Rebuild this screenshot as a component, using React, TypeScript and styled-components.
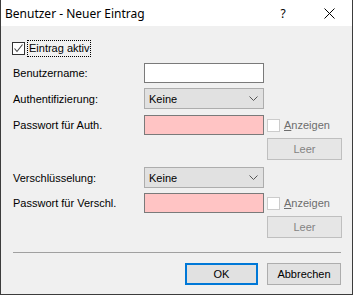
import React from "react";
import styled, { createGlobalStyle } from "styled-components";

const Global = createGlobalStyle`
  html, body { margin: 0; padding: 0; background: #f0f0f0; }
  body { font-family: "Liberation Sans", Arial, sans-serif; font-size: 11px; color: #000; }
  * { box-sizing: border-box; }
`;

const Window = styled.div`
  width: 353px;
  height: 295px;
  background: #f0f0f0;
  border-left: 1px solid #3c3c3c;
  border-right: 1px solid #3c3c3c;
  border-bottom: 1px solid #3c3c3c;
  display: flex;
  flex-direction: column;
`;

const TitleBar = styled.div`
  height: 26px;
  background: #fff;
  display: flex;
  align-items: center;
  padding-left: 4px;
  font-family: "Noto Sans", "Liberation Sans", sans-serif;
  font-size: 12px;
`;

const Title = styled.div`
  flex: 1;
`;

const TitleButton = styled.div<{ $w: number }>`
  width: ${(p) => p.$w}px;
  height: 26px;
  display: flex;
  align-items: center;
  justify-content: center;
`;

const Body = styled.div`
  padding-left: 12px;
  padding-right: 10px;
  display: flex;
  flex-direction: column;
`;

const Row = styled.div<{ $mt: number; $h: number; $ml?: number }>`
  margin-top: ${(p) => p.$mt}px;
  margin-left: ${(p) => p.$ml ?? 0}px;
  height: ${(p) => p.$h}px;
  display: flex;
  align-items: center;
`;

const Label = styled.div`
  width: 131px;
  flex: none;
`;

const Spacer = styled.div<{ $w: number }>`
  width: ${(p) => p.$w}px;
  flex: none;
`;

const TextBox = styled.div<{ $pink?: boolean }>`
  width: 120px;
  height: 20px;
  border: 1px solid #7a7a7a;
  background: ${(p) => (p.$pink ? "#ffc4c4" : "#fff")};
  flex: none;
`;

const Combo = styled.div`
  width: 120px;
  height: 21px;
  border: 1px solid #adadad;
  background: #e1e1e1;
  display: flex;
  align-items: center;
  justify-content: space-between;
  padding: 0 5px 0 4px;
  flex: none;
`;

const Check = styled.div<{ $disabled?: boolean }>`
  width: 13px;
  height: 13px;
  border: 1px solid ${(p) => (p.$disabled ? "#cccccc" : "#333")};
  background: #fff;
  display: flex;
  align-items: center;
  justify-content: center;
  flex: none;
`;

const CheckLabel = styled.div<{ $disabled?: boolean; $focus?: boolean }>`
  margin-left: ${(p) => (p.$focus ? 3 : 4)}px;
  color: ${(p) => (p.$disabled ? "#6d6d6d" : "#000")};
  padding: ${(p) => (p.$focus ? "1px 0 1px 1px" : "0")};
  outline: ${(p) => (p.$focus ? "1px dotted #000" : "none")};
  line-height: 13px;
  u { text-decoration: underline; }
`;

const SmallButton = styled.div`
  width: 75px;
  height: 22px;
  border: 1px solid #bfbfbf;
  background: #e6e6e6;
  color: #838383;
  display: flex;
  align-items: center;
  justify-content: center;
  flex: none;
`;

const Separator = styled.div`
  margin-top: 14px;
  margin-right: 1px;
  height: 1px;
  background: #a0a0a0;
`;

const ButtonRow = styled.div`
  margin-top: 10px;
  margin-right: 1px;
  display: flex;
  justify-content: flex-end;
  gap: 9px;
`;

const DialogButton = styled.div<{ $default?: boolean }>`
  width: ${(p) => (p.$default ? 73 : 74)}px;
  height: 22px;
  border: ${(p) => (p.$default ? "2px solid #0078d7" : "1px solid #adadad")};
  background: #e1e1e1;
  display: flex;
  align-items: center;
  justify-content: center;
  flex: none;
`;

const Chevron = () => (
  <svg width="9" height="5" viewBox="0 0 9 5">
    <path d="M0.5 0.5 L4.5 4.5 L8.5 0.5" fill="none" stroke="#555" strokeWidth="1" />
  </svg>
);

const Tick = () => (
  <svg width="11" height="11" viewBox="0 0 11 11">
    <path d="M1.5 5.5 L4 8.5 L9.5 1.5" fill="none" stroke="#444" strokeWidth="1.1" />
  </svg>
);

const CloseIcon = () => (
  <svg width="11" height="11" viewBox="0 0 11 11">
    <path d="M0.5 0.5 L10.5 10.5 M10.5 0.5 L0.5 10.5" stroke="#000" strokeWidth="1" />
  </svg>
);

export default function App() {
  return (
    <>
      <Global />
      <Window>
        <TitleBar>
          <Title>Benutzer - Neuer Eintrag</Title>
          <TitleButton $w={46}>?</TitleButton>
          <TitleButton $w={46}>
            <CloseIcon />
          </TitleButton>
        </TitleBar>
        <Body>
          <Row $mt={15} $h={14} $ml={-1}>
            <Check>
              <Tick />
            </Check>
            <CheckLabel $focus>Eintrag aktiv</CheckLabel>
          </Row>
          <Row $mt={8} $h={20}>
            <Label>Benutzername:</Label>
            <TextBox />
          </Row>
          <Row $mt={5} $h={21}>
            <Label>Authentifizierung:</Label>
            <Combo>
              <span>Keine</span>
              <Chevron />
            </Combo>
          </Row>
          <Row $mt={6} $h={20}>
            <Label>Passwort für Auth.</Label>
            <TextBox $pink />
            <Spacer $w={3} />
            <Check $disabled />
            <CheckLabel $disabled>
              <u>A</u>nzeigen
            </CheckLabel>
          </Row>
          <Row $mt={3} $h={22}>
            <Spacer $w={254} />
            <SmallButton>Leer</SmallButton>
          </Row>
          <Row $mt={7} $h={21}>
            <Label>Verschlüsselung:</Label>
            <Combo>
              <span>Keine</span>
              <Chevron />
            </Combo>
          </Row>
          <Row $mt={5} $h={20}>
            <Label>Passwort für Verschl.</Label>
            <TextBox $pink />
            <Spacer $w={3} />
            <Check $disabled />
            <CheckLabel $disabled>
              <u>A</u>nzeigen
            </CheckLabel>
          </Row>
          <Row $mt={3} $h={22}>
            <Spacer $w={254} />
            <SmallButton>Leer</SmallButton>
          </Row>
          <Separator />
          <ButtonRow>
            <DialogButton $default>OK</DialogButton>
            <DialogButton>Abbrechen</DialogButton>
          </ButtonRow>
        </Body>
      </Window>
    </>
  );
}
